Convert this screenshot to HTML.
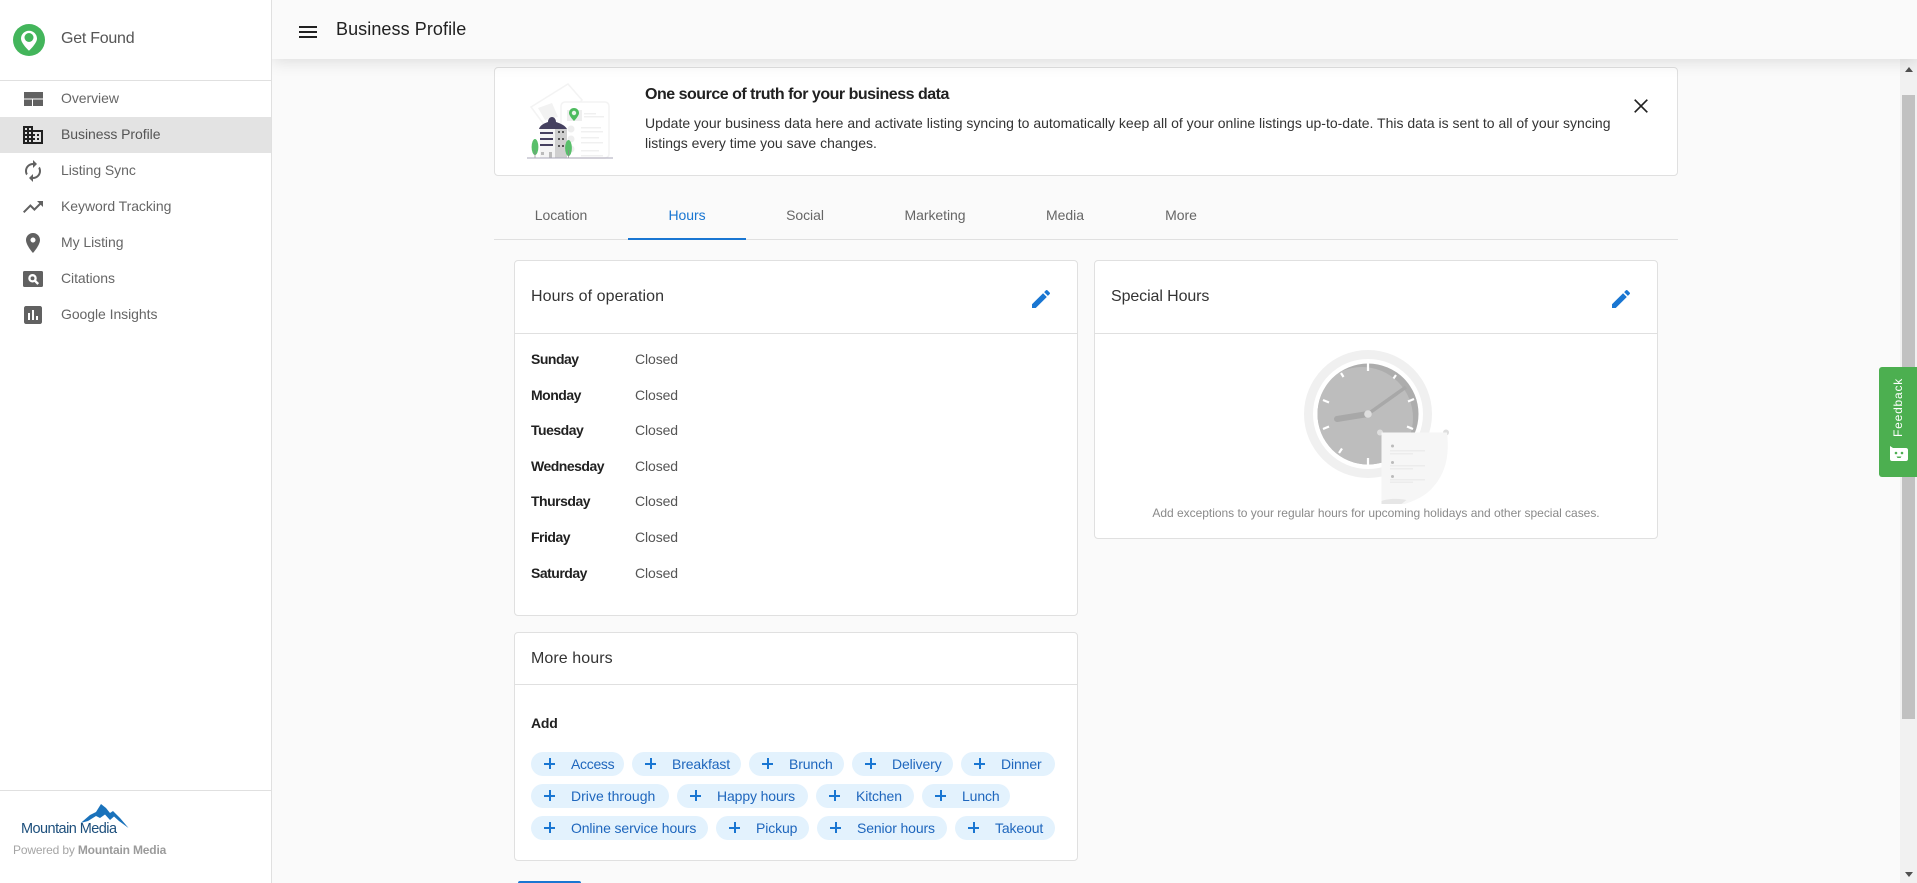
<!DOCTYPE html>
<html lang="en"><head><meta charset="utf-8"><title>Business Profile</title>
<style>
*{box-sizing:border-box}
html,body{margin:0;padding:0;width:1917px;height:883px;overflow:hidden;background:#fafafa;font-family:"Liberation Sans",Arial,sans-serif;color:#212121}
#root{position:absolute;left:0;top:0;width:1917px;height:883px;overflow:hidden;background:#fafafa}
.a{position:absolute;white-space:nowrap}
svg{position:absolute;display:block}
#side{position:absolute;left:0;top:0;width:272px;height:883px;background:#fff;border-right:1px solid #e0e0e0;z-index:3}
.nav{position:absolute;left:61px;font-size:14px;line-height:20px;color:#666;letter-spacing:-.06px}
.ic{fill:#616161}
#head{position:absolute;left:272px;top:0;width:1645px;height:59px;background:#fafafa;box-shadow:0 2px 16px rgba(0,0,0,.13);z-index:2}
.card{position:absolute;background:#fff;border:1px solid #e0e0e0;border-radius:4px}
.hline{position:absolute;height:1px;background:#e0e0e0}
.tab{position:absolute;top:205px;height:20px;line-height:20px;text-align:center;font-size:14px;color:#666;letter-spacing:-.05px}
.ct{position:absolute;font-size:16px;line-height:20px;color:#333;letter-spacing:.08px}
.d{position:absolute;left:531px;font-size:14px;line-height:20px;font-weight:bold;color:#212121;letter-spacing:-.5px}
.c{position:absolute;left:635px;font-size:14px;line-height:20px;color:#555;letter-spacing:-.1px}
.chip{position:absolute;height:24px;background:#e3f2fd;border-radius:12px;font-size:14px;line-height:24px;color:#1e66bd;padding-left:40px;white-space:nowrap;letter-spacing:-.12px}
.chip:before{content:"";position:absolute;left:13px;top:10.5px;width:11px;height:2px;background:#1976d2}
.chip:after{content:"";position:absolute;left:17.5px;top:6px;width:2px;height:11px;background:#1976d2}
</style></head><body>
<div id="root">

<div id="side">
  <svg style="left:13px;top:24px" width="32" height="32" viewBox="0 0 32 32"><circle cx="16" cy="16" r="16" fill="#43b55b"/><path d="M16 6.700c-4.400 0-8 3.500-8 7.800 0 5 8 12.200 8 12.200s8-7.200 8-12.200c0-4.300-3.600-7.800-8-7.800z" fill="#fff"/><circle cx="16" cy="13.500" r="4.500" fill="#43b55b"/></svg>
  <div class="a" style="left:61px;top:29px;font-size:16px;line-height:20px;color:#555;letter-spacing:-.25px">Get Found</div>
  <div class="hline" style="left:0;top:80px;width:271px"></div>
  <div style="position:absolute;left:0;top:117px;width:271px;height:36px;background:#e3e3e3"></div>

  <svg style="left:21px;top:87px" width="24" height="24" viewBox="0 0 24 24"><path class="ic" d="M3 5h19v6.500H3zM3 12.500h8V19H3zM12 12.500h10V19H12z"/></svg>
  <div class="nav" style="top:88px">Overview</div>

  <svg style="left:21px;top:123px" width="24" height="24" viewBox="0 0 24 24"><path fill="#212121" d="M12 7V3H2v18h20V7H12zM6 19H4v-2h2v2zm0-4H4v-2h2v2zm0-4H4V9h2v2zm0-4H4V5h2v2zm4 12H8v-2h2v2zm0-4H8v-2h2v2zm0-4H8V9h2v2zm0-4H8V5h2v2zm10 12h-8v-2h2v-2h-2v-2h2v-2h-2V9h8v10zm-2-8h-2v2h2v-2zm0 4h-2v2h2v-2z"/></svg>
  <div class="nav" style="top:124px;color:#555">Business Profile</div>

  <svg style="left:21px;top:159px" width="24" height="24" viewBox="0 0 24 24"><path class="ic" d="M12 6v3l4-4-4-4v3c-4.420 0-8 3.580-8 8 0 1.570.46 3.030 1.240 4.260L6.700 14.800c-.45-.83-.7-1.790-.7-2.800 0-3.310 2.690-6 6-6zm6.760 1.740L17.300 9.200c.44.84.7 1.790.7 2.800 0 3.310-2.690 6-6 6v-3l-4 4 4 4v-3c4.420 0 8-3.580 8-8 0-1.570-.46-3.030-1.240-4.260z"/></svg>
  <div class="nav" style="top:160px">Listing Sync</div>

  <svg style="left:21px;top:195px" width="24" height="24" viewBox="0 0 24 24"><path class="ic" d="M16 6l2.290 2.290-4.880 4.880-4-4L2 16.590 3.410 18l6-6 4 4 6.300-6.290L22 12V6z"/></svg>
  <div class="nav" style="top:196px">Keyword Tracking</div>

  <svg style="left:21px;top:231px" width="24" height="24" viewBox="0 0 24 24"><path class="ic" d="M12 2C8.130 2 5 5.130 5 9c0 5.250 7 13 7 13s7-7.750 7-13c0-3.870-3.130-7-7-7zm0 9.500c-1.380 0-2.500-1.120-2.500-2.500s1.120-2.500 2.500-2.500 2.500 1.120 2.500 2.500-1.120 2.500-2.500 2.500z"/></svg>
  <div class="nav" style="top:232px">My Listing</div>

  <svg style="left:21px;top:267px" width="24" height="24" viewBox="0 0 24 24"><rect x="2" y="4" width="20" height="16" rx="1.500" fill="#616161"/><circle cx="11.500" cy="11.300" r="3.100" fill="none" stroke="#fff" stroke-width="2.300"/><path d="M14 13.800l3.200 3.200" stroke="#fff" stroke-width="2.400"/></svg>
  <div class="nav" style="top:268px">Citations</div>

  <svg style="left:21px;top:303px" width="24" height="24" viewBox="0 0 24 24"><path class="ic" d="M19 3H5c-1.100 0-2 .9-2 2v14c0 1.100.9 2 2 2h14c1.100 0 2-.9 2-2V5c0-1.100-.9-2-2-2zM9 17H7v-7h2v7zm4 0h-2V7h2v10zm4 0h-2v-4h2v4z"/></svg>
  <div class="nav" style="top:304px">Google Insights</div>

  <div class="hline" style="left:0;top:790px;width:271px"></div>
  <svg style="left:78px;top:802px" width="52" height="30" viewBox="78 802 52 30"><path d="M80.700 823L90 815L96 812L101 804L106 808L110 813L113 811L120 818L128.500 828L119 821L114 816.500L110 820L105 814.500L100 818L96 816L88 821Z" fill="#1a72bb"/></svg>
  <div class="a" style="left:21px;top:820px;font-size:14.500px;line-height:18px;color:#1d4f7c;letter-spacing:-.55px">Mountain Media</div>
  <div class="a" style="left:13px;top:842px;font-size:12px;line-height:16px;color:#a5a5a5;letter-spacing:-.17px">Powered by <b style="color:#9b9b9b">Mountain Media</b></div>
</div>

<div id="head">
  <div style="position:absolute;left:27px;top:26px;width:18px;height:2px;background:#212121"></div>
  <div style="position:absolute;left:27px;top:31px;width:18px;height:2px;background:#212121"></div>
  <div style="position:absolute;left:27px;top:36px;width:18px;height:2px;background:#212121"></div>
  <div class="a" style="left:64px;top:18px;font-size:18px;line-height:22px;color:#212121;letter-spacing:.08px">Business Profile</div>
</div>

<!-- scrollbar -->
<div style="position:absolute;left:1900px;top:59px;width:17px;height:824px;background:#f1f1f1"></div>
<div style="position:absolute;left:1902px;top:95px;width:13px;height:624px;background:#c1c1c1"></div>
<svg style="left:1905px;top:67px" width="8" height="5" viewBox="0 0 8 5"><path d="M4 0L8 5H0z" fill="#505050"></path></svg>
<svg style="left:1905px;top:872px" width="8" height="5" viewBox="0 0 8 5"><path d="M0 0h8L4 5z" fill="#505050"></path></svg>

<!-- banner -->
<div class="card" style="left:494px;top:67px;width:1184px;height:109px"></div>
<svg style="left:520px;top:78px" width="100" height="84" viewBox="520 78 100 84">
  <path d="M531 107L568 84L582 100L560 128L551 134Z" fill="#fff" stroke="#f3f3f3" stroke-width="1.500"/>
  <path d="M538 108l14-5 6 14-13 3z" fill="#f2f2f2"/>
  <rect x="561" y="102" width="48" height="56" rx="4" fill="#fff" stroke="#f3f3f3" stroke-width="1.500"/>
  <rect x="567" y="110" width="15" height="11" fill="#eee"/>
  <path d="M574 108c-3 0-5 2.300-5 5 0 3 5 8 5 8s5-5 5-8c0-2.700-2-5-5-5z" fill="#4dbb5e"/><circle cx="574" cy="113" r="2.200" fill="#e9f5ea"/>
  <path d="M584 113h12v1.500h-12zM584 116h20v1.500h-20zM581 127h20v1.500h-20zM581 131h22v1.500h-22zM581 137h18v1.500h-18zM581 142h22v1.500h-22zM581 150h18v1.500h-18zM581 155h22v1.500h-22z" fill="#f0f0f0"/>
  <circle cx="571" cy="129" r="3.500" fill="#eee"/><circle cx="571" cy="139" r="3.500" fill="#eee"/><circle cx="571" cy="149" r="3.500" fill="#eee"/>
  <rect x="540" y="129" width="15" height="29" fill="#f4f4f4"/><rect x="555" y="129" width="12" height="29" fill="#cfcfcf"/>
  <path d="M539 129c1-4 6-6 9-7 0-3 2-5 4-5s4 2 4 5c3 1 9 3 11 7z" fill="#45405f"/>
  <path d="M540 132h13v2h-13zM540 138h13v2h-13zM540 144h13v2h-13z" fill="#45405f"/>
  <path d="M558 131h2v2h-2zM562 131h2v2h-2zM558 138h2v2h-2zM562 138h2v2h-2zM558 145h2v2h-2zM562 145h2v2h-2z" fill="#555"/>
  <path d="M541 152h3v3h-3zM549 152h3v6h-3z" fill="#bbb"/>
  <ellipse cx="535" cy="147" rx="3.400" ry="8" fill="#58bf6a"/><path d="M535 150v8" stroke="#888" stroke-width=".7"/>
  <ellipse cx="568.500" cy="148" rx="3.400" ry="8" fill="#58bf6a"/><path d="M568.500 150v8" stroke="#888" stroke-width=".7"/>
  <path d="M527 158h86" stroke="#aaa7b8" stroke-width="1"/>
</svg>
<div class="a" style="left:645px;top:85px;font-size:16px;line-height:20px;font-weight:bold;color:#212121;letter-spacing:-.49px">One source of truth for your business data</div>
<div class="a" style="left:645px;top:113px;font-size:14px;line-height:20px;color:#333;letter-spacing:0">Update your business data here and activate listing syncing to automatically keep all of your online listings up-to-date. This data is sent to all of your syncing</div>
<div class="a" style="left:645px;top:133px;font-size:14px;line-height:20px;color:#333;letter-spacing:0">listings every time you save changes.</div>
<svg style="left:1634px;top:99px" width="14" height="14" viewBox="0 0 14 14"><path d="M.7.7l12.600 12.600M13.300.7L.7 13.300" stroke="#212121" stroke-width="1.700"/></svg>

<!-- tabs -->
<div class="tab" style="left:501px;width:120px">Location</div>
<div class="tab" style="left:628px;width:118px;color:#1976d2">Hours</div>
<div class="tab" style="left:745px;width:120px">Social</div>
<div class="tab" style="left:875px;width:120px">Marketing</div>
<div class="tab" style="left:1005px;width:120px">Media</div>
<div class="tab" style="left:1121px;width:120px">More</div>
<div class="hline" style="left:494px;top:239px;width:1184px"></div>
<div style="position:absolute;left:628px;top:238px;width:118px;height:2px;background:#1976d2"></div>

<!-- hours card -->
<div class="card" style="left:514px;top:260px;width:564px;height:356px"></div>
<div class="hline" style="left:515px;top:333px;width:562px"></div>
<div class="ct" style="left:531px;top:287px">Hours of operation</div>
<svg style="left:1029px;top:287px" width="24" height="24" viewBox="0 0 24 24"><path fill="#1976d2" d="M3 17.250V21h3.750L17.810 9.940l-3.750-3.750L3 17.250zM20.710 7.040c.39-.39.39-1.020 0-1.410l-2.340-2.340c-.39-.39-1.020-.39-1.410 0l-1.830 1.830 3.750 3.750 1.830-1.830z"/></svg>
<div class="d" style="top:349px">Sunday</div><div class="c" style="top:349px">Closed</div>
<div class="d" style="top:385px">Monday</div><div class="c" style="top:385px">Closed</div>
<div class="d" style="top:420px">Tuesday</div><div class="c" style="top:420px">Closed</div>
<div class="d" style="top:456px">Wednesday</div><div class="c" style="top:456px">Closed</div>
<div class="d" style="top:491px">Thursday</div><div class="c" style="top:491px">Closed</div>
<div class="d" style="top:527px">Friday</div><div class="c" style="top:527px">Closed</div>
<div class="d" style="top:563px">Saturday</div><div class="c" style="top:563px">Closed</div>

<!-- special hours -->
<div class="card" style="left:1094px;top:260px;width:564px;height:279px"></div>
<div class="hline" style="left:1095px;top:333px;width:562px"></div>
<div class="ct" style="left:1111px;top:287px;letter-spacing:-.1px">Special Hours</div>
<svg style="left:1609px;top:287px" width="24" height="24" viewBox="0 0 24 24"><path fill="#1976d2" d="M3 17.250V21h3.750L17.810 9.940l-3.750-3.750L3 17.250zM20.710 7.040c.39-.39.39-1.020 0-1.410l-2.340-2.340c-.39-.39-1.020-.39-1.410 0l-1.830 1.830 3.750 3.750 1.830-1.830z"/></svg>
<svg style="left:1295px;top:340px" width="170" height="170" viewBox="1295 340 170 170">
  <defs><clipPath id="cf"><circle cx="1368" cy="414" r="50.500"/></clipPath></defs>
  <circle cx="1368" cy="414" r="64" fill="#f0f0f0"/>
  <circle cx="1368" cy="414" r="55" fill="#fff"/>
  <circle cx="1368" cy="414" r="50.500" fill="#adadad"/>
  <g clip-path="url(#cf)"><circle cx="1362" cy="418" r="51" fill="#bdbdbd"/></g>
  <g stroke="#fff" stroke-width="2.200"><path d="M1368 363v8M1368 458v7M1341 373l2.500 4M1396 375l-2.500 3.500M1323 400l6 2.500M1414 399l-6 2.500M1323 429l6-2.500M1413 429l-6-2.500M1339 453l3-4.500"/></g>
  <path d="M1368 414l-31 5" stroke="#a8a8a8" stroke-width="6" stroke-linecap="round"/>
  <path d="M1368 414l38-27" stroke="#a8a8a8" stroke-width="3.500"/>
  <circle cx="1368" cy="414" r="3.800" fill="#dedede"/>
  <circle cx="1380" cy="432.500" r="3" fill="#dedede"/><circle cx="1446" cy="432.500" r="3" fill="#dedede"/>
  <path d="M1381.500 432.500H1447C1449 450 1448 470 1434 486C1426 496 1416 500 1405 504H1381.500Z" fill="#f6f6f6"/>
  <path d="M1381.500 504v-3c5-2 15-3 25-1l-5 4z" fill="#e6e6e6"/>
  <path d="M1390 450h35v1.500h-35zM1390 453h23v1.500h-23zM1390 465h35v1.500h-35zM1390 468h23v1.500h-23zM1390 479h35v1.500h-35zM1390 481.500h23v1.500h-23z" fill="#ececec"/>
  <circle cx="1392.500" cy="446" r="1.500" fill="#bbb"/><circle cx="1392.500" cy="462.500" r="1.500" fill="#bbb"/><circle cx="1392.500" cy="476.500" r="1.500" fill="#bbb"/>
</svg>
<div class="a" style="left:1151px;top:505px;width:450px;text-align:center;font-size:12px;line-height:16px;color:#8a8a8a;letter-spacing:-.02px">Add exceptions to your regular hours for upcoming holidays and other special cases.</div>

<!-- more hours -->
<div class="card" style="left:514px;top:632px;width:564px;height:229px"></div>
<div class="hline" style="left:515px;top:684px;width:562px"></div>
<div class="ct" style="left:531px;top:649px">More hours</div>
<div class="d" style="top:713px;letter-spacing:-.2px">Add</div>
<div class="chip" style="left:531px;top:752px;width:93px;letter-spacing:-.3px">Access</div>
<div class="chip" style="left:632px;top:752px;width:109px">Breakfast</div>
<div class="chip" style="left:749px;top:752px;width:95px">Brunch</div>
<div class="chip" style="left:852px;top:752px;width:101px">Delivery</div>
<div class="chip" style="left:961px;top:752px;width:94px">Dinner</div>
<div class="chip" style="left:531px;top:784px;width:138px;letter-spacing:.02px">Drive through</div>
<div class="chip" style="left:677px;top:784px;width:131px">Happy hours</div>
<div class="chip" style="left:816px;top:784px;width:98px">Kitchen</div>
<div class="chip" style="left:922px;top:784px;width:88px">Lunch</div>
<div class="chip" style="left:531px;top:816px;width:177px">Online service hours</div>
<div class="chip" style="left:716px;top:816px;width:93px">Pickup</div>
<div class="chip" style="left:817px;top:816px;width:130px">Senior hours</div>
<div class="chip" style="left:955px;top:816px;width:100px">Takeout</div>

<div style="position:absolute;left:518px;top:881px;width:63px;height:2px;background:#1976d2;border-radius:4px 4px 0 0"></div>

<!-- feedback -->
<div style="position:absolute;left:1879px;top:367px;width:38px;height:110px;background:#4caf50;border-radius:3px 0 0 3px;z-index:4">
  <div style="position:absolute;left:10px;top:12px;width:18px;height:58px;line-height:18px;writing-mode:vertical-rl;transform:rotate(180deg);font-size:12px;color:#fff;letter-spacing:.8px;white-space:nowrap;text-align:left">Feedback</div>
  <svg style="left:10px;top:78px" width="20" height="17" viewBox="0 0 20 17"><path d="M1 1l3 2h13c1 0 2 .8 2 2v9c0 1.200-1 2-2 2H3c-1.200 0-2-.8-2-2z" fill="#fff"/><circle cx="7" cy="8" r="1.300" fill="#4caf50"/><circle cx="13" cy="8" r="1.300" fill="#4caf50"/><path d="M7.500 11.500h5l-1 1.500h-3z" fill="#4caf50"/></svg>
</div>
</div>
</body></html>
